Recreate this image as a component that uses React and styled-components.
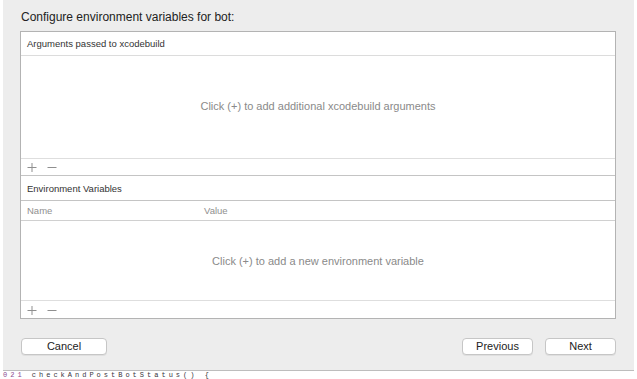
import React from "react";
import styled, { createGlobalStyle } from "styled-components";

const Global = createGlobalStyle`
  html, body { margin: 0; padding: 0; background: #ffffff; }
  body { font-family: "Liberation Sans", Arial, sans-serif; overflow: hidden; }
`;

const Page = styled.div`
  width: 637px;
  height: 379px;
  display: flex;
  flex-direction: column;
`;

const Window = styled.div`
  margin-left: 3px;
  width: 631px;
  height: 371px;
  background: #ededed;
  box-sizing: border-box;
  padding: 10px 17px 0 17px;
  display: flex;
  flex-direction: column;
`;

const Title = styled.div`
  font-size: 12px;
  color: #222;
  height: 21px;
  line-height: 14px;
  padding-left: 1px;
`;

const Box = styled.div`
  width: 596px;
  height: 288px;
  box-sizing: border-box;
  border: 1px solid #b3b3b3;
  background: #fff;
  display: flex;
  flex-direction: column;
`;

const Header = styled.div`
  height: ${(p) => p.$h}px;
  flex: none;
  box-sizing: border-box;
  border-bottom: 1px solid ${(p) => p.$line || "#dcdcdc"};
  display: flex;
  align-items: center;
  padding-left: 6px;
  font-size: 9.5px;
  color: ${(p) => p.$color || "#333"};
  background: #fff;
`;

const Col = styled.div`
  width: ${(p) => p.$w}px;
  flex: none;
`;

const Empty = styled.div`
  flex: ${(p) => (p.$h ? "none" : 1)};
  height: ${(p) => (p.$h ? p.$h + "px" : "auto")};
  display: flex;
  align-items: center;
  justify-content: center;
  font-size: 11px;
  color: #8a8a8a;
  padding-bottom: ${(p) => p.$pb || 0}px;
  box-sizing: border-box;
`;

const Toolbar = styled.div`
  height: ${(p) => p.$h}px;
  flex: none;
  box-sizing: border-box;
  border-top: 1px solid #dedede;
  border-bottom: ${(p) => (p.$last ? "none" : "1px solid #c4c4c4")};
  display: flex;
  align-items: center;
  gap: 10px;
  padding-left: 6px;
`;

const Icon = styled.svg`
  width: 10px;
  height: 10px;
  stroke: #8f8f8f;
  stroke-width: 1;
  fill: none;
`;

const Plus = () => (
  <Icon viewBox="0 0 10 10">
    <line x1="0.5" y1="5.5" x2="9.5" y2="5.5" />
    <line x1="5" y1="1" x2="5" y2="10" />
  </Icon>
);

const Minus = () => (
  <Icon viewBox="0 0 10 10">
    <line x1="0.5" y1="5.5" x2="9.5" y2="5.5" />
  </Icon>
);

const Footer = styled.div`
  display: flex;
  align-items: center;
  margin-top: 19px;
  gap: 12px;
`;

const Button = styled.button`
  width: ${(p) => p.$w}px;
  height: 17px;
  box-sizing: border-box;
  border: 1px solid #c6c6c6;
  border-radius: 4px;
  background: #fff;
  box-shadow: 0 1px 0 rgba(0, 0, 0, 0.06);
  font-family: "Liberation Sans", Arial, sans-serif;
  font-size: 11px;
  color: #222;
  padding: 0;
  line-height: 15px;
  margin-left: ${(p) => p.$ml || 0}px;
`;

const CodeStrip = styled.div`
  height: 8px;
  display: flex;
  align-items: flex-end;
  border-top: 1px solid #bdbdbd;
  margin-left: 3px;
  width: 631px;
`;

const Code = styled.div`
  font-family: "Liberation Mono", monospace;
  font-size: 7px;
  line-height: 7px;
  letter-spacing: 3px;
  color: #3a3540;
  white-space: pre;
`;

const LineNo = styled.span`
  color: #8b4a8f;
`;

export default function App() {
  return (
    <Page>
      <Global />
      <Window>
        <Title>Configure environment variables for bot:</Title>
        <Box>
          <Header $h={24}>Arguments passed to xcodebuild</Header>
          <Empty $h={102} $pb={2}>Click (+) to add additional xcodebuild arguments</Empty>
          <Toolbar $h={18}>
            <Plus />
            <Minus />
          </Toolbar>
          <Header $h={25} $line="#c4c4c4">Environment Variables</Header>
          <Header $h={20} $color="#8f8f8f" $line="#d0d0d0">
            <Col $w={177}>Name</Col>
            <Col $w={100}>Value</Col>
          </Header>
          <Empty>Click (+) to add a new environment variable</Empty>
          <Toolbar $h={18} $last>
            <Plus />
            <Minus />
          </Toolbar>
        </Box>
        <Footer>
          <Button $w={86} $ml={1}>Cancel</Button>
          <Button $w={71} $ml={343}>Previous</Button>
          <Button $w={71}>Next</Button>
        </Footer>
      </Window>
      <CodeStrip>
        <Code>
          <LineNo>021 </LineNo>checkAndPostBotStatus() {"{"}
        </Code>
      </CodeStrip>
    </Page>
  );
}
